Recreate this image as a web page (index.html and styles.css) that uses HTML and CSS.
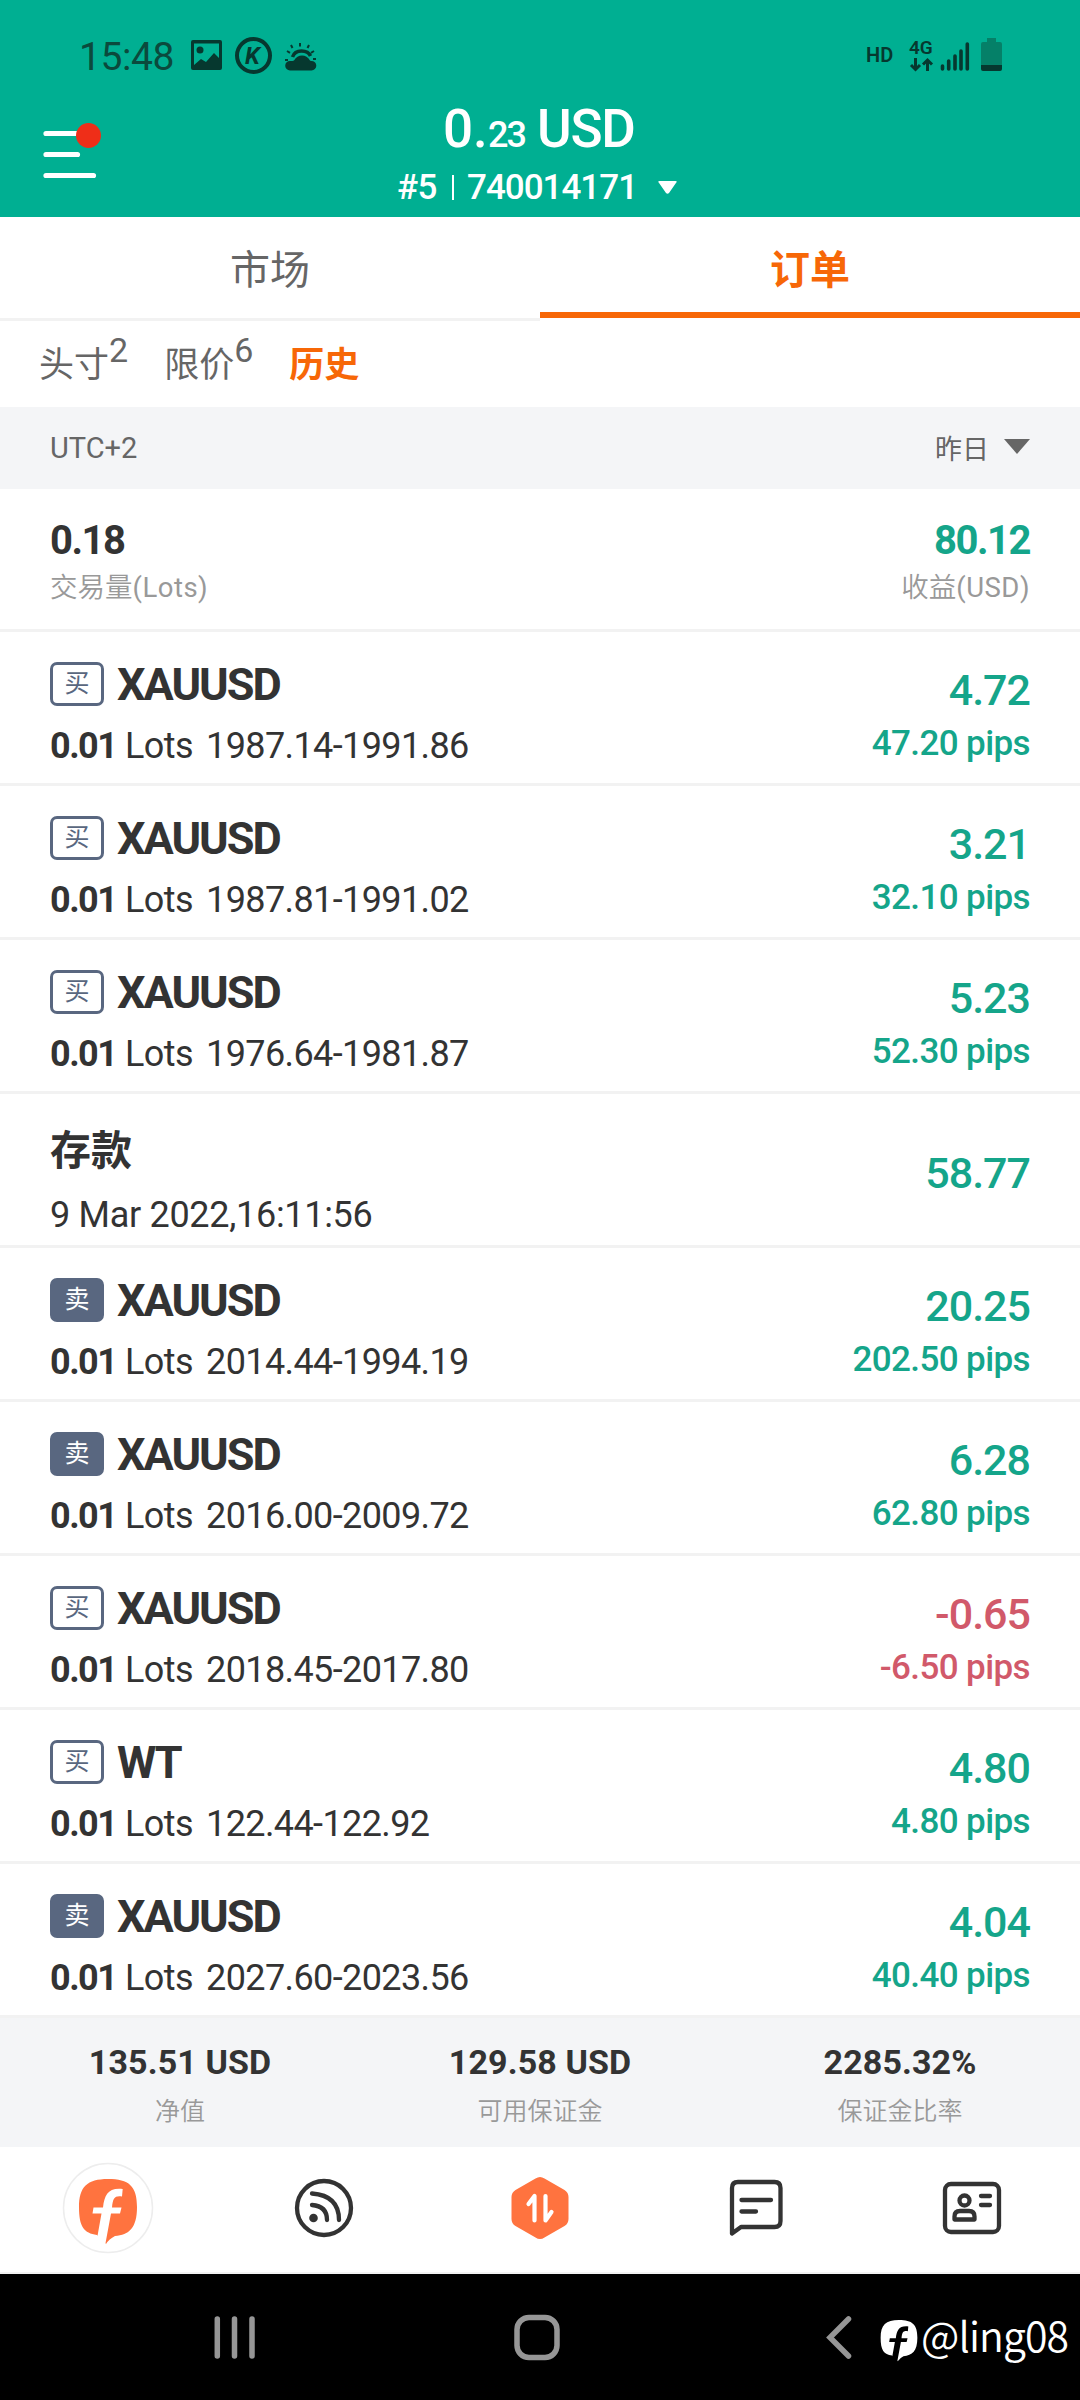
FILE: index.html
```html
<!DOCTYPE html>
<html lang="zh-CN">
<head>
<meta charset="utf-8">
<title>订单</title>
<link rel="stylesheet" href="styles.css">
</head>
<body>
<div class="screen">
  <header class="header">
    <div class="status">
      <span class="clock">15:48</span>
      <svg class="st-left" width="130" height="40" viewBox="188 36 130 40">
        <path fill="#06382f" fill-rule="evenodd" d="M193 40h27a2 2 0 0 1 2 2v26a2 2 0 0 1-2 2h-27a2 2 0 0 1-2-2V42a2 2 0 0 1 2-2zM194 43.500V65l7-6 5 3 8-9 5 5V43.500z"/>
        <circle cx="200" cy="50" r="3.500" fill="#06382f"/>
        <circle cx="253.500" cy="55.500" r="16.500" fill="none" stroke="#06382f" stroke-width="4"/>
        <text class="k-letter" x="245" y="64">K</text>
        <path fill="#06382f" d="M290 70.500a4.800 4.800 0 0 1 0-9.600q3 0 4-.5q3-5 8-5t8 5q1 .5 1.500.5a4.800 4.800 0 0 1 0 9.600z"/>
        <path fill="none" stroke="#06382f" stroke-width="3.500" d="M292.500 57q2-6 9-6t9 5"/>
        <path fill="none" stroke="#06382f" stroke-width="2" d="M300 43v3.500M309 45l-1.500 3M291 45l1.500 3M314 51l-3 1.800M287 51l3 1.800M316 59h-3M285 60h3"/>
      </svg>
      <svg class="st-right" width="140" height="40" viewBox="864 36 140 40">
        <text class="hd" x="866" y="62">HD</text>
        <text class="net" x="909" y="53.500">4G</text>
        <path fill="none" stroke="#06382f" stroke-width="3" d="M915.500 58v11M911 65l4.500 4.500 4.500-4.500M927.500 71V60.500M923 64.500l4.500-4.500 4.500 4.500"/>
        <path fill="none" stroke="#06382f" stroke-width="3.600" stroke-linecap="round" d="M942.500 66v3M948.700 61v8M955 56v13M961 51v18M967.300 44v25"/>
        <path fill="#058068" d="M987 38h9v4h4a2 2 0 0 1 2 2v21h-21V44a2 2 0 0 1 2-2h4z"/>
        <path fill="#06382f" d="M981 65h21v4a2 2 0 0 1-2 2h-17a2 2 0 0 1-2-2z"/>
      </svg>
    </div>
    <div class="account">
      <svg class="menu" width="60" height="58" viewBox="42 122 60 58">
        <path stroke="#fff" stroke-width="5.200" stroke-linecap="round" d="M46 133.500h40M46 154.500h31.500M46 175.500h47.500"/>
        <circle cx="88.500" cy="135.500" r="12.500" fill="#ef2e18"/>
      </svg>
      <div class="balance-box">
        <div class="balance"><span class="whole">0.</span><span class="cents">23</span><span class="cur">USD</span></div>
        <div class="acct"><span class="num-id">#5</span><i class="bar"></i><span class="num-acct">740014171</span><svg class="caret" width="19" height="13" viewBox="0 0 19 13"><path fill="#fff" d="M1.500 0h16q2 0 .8 1.600l-7.300 10.400q-1.500 1.600-3 0L.7 1.600Q-.5 0 1.500 0z"/></svg></div>
      </div>
    </div>
  </header>

  <nav class="tabs"><div class="tab">市场</div><div class="tab active">订单</div></nav>
  <nav class="subtabs"><span class="sub">头寸<b class="cnt">2</b></span><span class="sub">限价<b class="cnt">6</b></span><span class="sub on">历史</span></nav>
  <div class="filter"><span class="tz">UTC+2</span><span class="day">昨日<svg width="26" height="15" viewBox="0 0 26 15"><path fill="#666" d="M0 0h26L13 15z"/></svg></span></div>
  <section class="summary">
    <div><div class="total">0.18</div><div class="caption">交易量<span class="lat">(Lots)</span></div></div>
    <div class="right"><div class="total gain">80.12</div><div class="caption">收益<span class="lat">(USD)</span></div></div>
  </section>

  <main class="orders">
    <article class="row"><div><div class="sym"><span class="badge buy">买</span><span class="name">XAUUSD</span></div><div class="detail"><b>0.01</b><span class="unit">Lots</span><span class="px">1987.14-1991.86</span></div></div><div class="result gain"><div class="amt">4.72</div><div class="pips">47.20 pips</div></div></article>
    <article class="row"><div><div class="sym"><span class="badge buy">买</span><span class="name">XAUUSD</span></div><div class="detail"><b>0.01</b><span class="unit">Lots</span><span class="px">1987.81-1991.02</span></div></div><div class="result gain"><div class="amt">3.21</div><div class="pips">32.10 pips</div></div></article>
    <article class="row"><div><div class="sym"><span class="badge buy">买</span><span class="name">XAUUSD</span></div><div class="detail"><b>0.01</b><span class="unit">Lots</span><span class="px">1976.64-1981.87</span></div></div><div class="result gain"><div class="amt">5.23</div><div class="pips">52.30 pips</div></div></article>
    <article class="row deposit"><div><div class="dep-name">存款</div><div class="dep-time">9 Mar 2022,16:11:56</div></div><div class="result gain"><div class="amt">58.77</div></div></article>
    <article class="row"><div><div class="sym"><span class="badge sell">卖</span><span class="name">XAUUSD</span></div><div class="detail"><b>0.01</b><span class="unit">Lots</span><span class="px">2014.44-1994.19</span></div></div><div class="result gain"><div class="amt">20.25</div><div class="pips">202.50 pips</div></div></article>
    <article class="row"><div><div class="sym"><span class="badge sell">卖</span><span class="name">XAUUSD</span></div><div class="detail"><b>0.01</b><span class="unit">Lots</span><span class="px">2016.00-2009.72</span></div></div><div class="result gain"><div class="amt">6.28</div><div class="pips">62.80 pips</div></div></article>
    <article class="row"><div><div class="sym"><span class="badge buy">买</span><span class="name">XAUUSD</span></div><div class="detail"><b>0.01</b><span class="unit">Lots</span><span class="px">2018.45-2017.80</span></div></div><div class="result loss"><div class="amt">-0.65</div><div class="pips">-6.50 pips</div></div></article>
    <article class="row"><div><div class="sym"><span class="badge buy">买</span><span class="name">WT</span></div><div class="detail"><b>0.01</b><span class="unit">Lots</span><span class="px">122.44-122.92</span></div></div><div class="result gain"><div class="amt">4.80</div><div class="pips">4.80 pips</div></div></article>
    <article class="row"><div><div class="sym"><span class="badge sell">卖</span><span class="name">XAUUSD</span></div><div class="detail"><b>0.01</b><span class="unit">Lots</span><span class="px">2027.60-2023.56</span></div></div><div class="result gain"><div class="amt">4.04</div><div class="pips">40.40 pips</div></div></article>
  </main>

  <section class="margin">
    <div><div class="m-val">135.51 USD</div><div class="m-cap">净值</div></div>
    <div><div class="m-val">129.58 USD</div><div class="m-cap">可用保证金</div></div>
    <div><div class="m-val">2285.32%</div><div class="m-cap">保证金比率</div></div>
  </section>

  <nav class="appbar">
    <svg width="92" height="92" viewBox="62 2162 92 92">
      <circle cx="108" cy="2208" r="44.500" fill="#fff" stroke="#ededed" stroke-width="1.500"/>
      <path fill="#ff733f" d="M108 2179C129 2179 137 2186 137 2207S129 2235 115 2236Q109 2239 106 2244L97 2235C84 2233 79 2227 79 2207S87 2179 108 2179z"/>
      <path fill="#fff" d="M122.700 2189C108 2187.500 104.500 2195 103 2207.500H93.500L92.500 2213.500H101.500L95.500 2247H104.800L111 2213.500H120L121.500 2207.500H112C113 2198 114.500 2195.500 122 2196.500z"/>
    </svg>
    <svg width="60" height="60" viewBox="294 2178 60 60" fill="none" stroke="#333" stroke-width="4.300" stroke-linecap="round">
      <circle cx="324" cy="2208" r="27"/><path d="M312 2193.500q27 2 27 26.500M312 2205q15 1 15 15"/><circle cx="313.500" cy="2218" r="4.300" fill="#333" stroke="none"/>
    </svg>
    <svg width="60" height="64" viewBox="510 2176 60 64">
      <path fill="#ff733f" d="M535.500 2178.500q4.500-3 9 0l20 11.500q4 2.500 4 7v22q0 4.500-4 7l-20 11.500q-4.500 3-9 0l-20-11.500q-4-2.500-4-7v-22q0-4.500 4-7z"/>
      <path fill="none" stroke="#fff" stroke-width="4.200" stroke-linecap="round" stroke-linejoin="round" d="M528.500 2204l6-8v24.500M545.500 2196v24.500l6-8.500"/>
    </svg>
    <svg width="60" height="60" viewBox="726 2180 60 60" fill="none" stroke="#333" stroke-width="4.300" stroke-linecap="round" stroke-linejoin="round">
      <path d="M738 2184h36.500q6 0 6 6v33q0 6-6 6H741l-9 6.500V2190q0-6 6-6zM741.500 2202H771M741.500 2213.500H756"/>
    </svg>
    <svg width="60" height="60" viewBox="942 2178 60 60" fill="none" stroke="#333" stroke-width="4.300" stroke-linecap="round" stroke-linejoin="round">
      <rect x="945" y="2184" width="54" height="48" rx="6"/><circle cx="964.500" cy="2200.500" r="5"/><path d="M954.500 2219.500v-3q0-5.500 5.500-5.500h9q5.500 0 5.500 5.500v3zM981 2196h9M981 2205h9"/>
    </svg>
  </nav>

  <footer class="sysnav">
    <svg class="keys" width="640" height="60" viewBox="212 2308 640 60" fill="none" stroke="#969696" stroke-width="5.500" stroke-linecap="round">
      <path d="M217.300 2319v37M234.500 2319v37M252 2319v37"/><rect x="517" y="2317.500" width="40" height="40" rx="12"/><path stroke-linejoin="miter" d="M848.500 2319l-18.500 18.500 18.500 18.500"/>
    </svg>
    <div class="mark">
      <svg width="38" height="44" viewBox="78 2178 60 68">
        <path fill="#fff" d="M108 2179C129 2179 137 2186 137 2207S129 2235 115 2236Q109 2239 106 2244L97 2235C84 2233 79 2227 79 2207S87 2179 108 2179z"/>
        <path d="M122.700 2189C108 2187.500 104.500 2195 103 2207.500H93.500L92.500 2213.500H101.500L95.500 2247H104.800L111 2213.500H120L121.500 2207.500H112C113 2198 114.500 2195.500 122 2196.500z"/>
      </svg>
      <span>@ling08</span>
    </div>
  </footer>
</div>
</body>
</html>
```
FILE: styles.css
```css
* { box-sizing: border-box; }
body { margin: 0; background: #fff; font-family: Roboto, "Noto Sans CJK SC", sans-serif; color: #333; }
svg { display: block; }
.screen { width: 1080px; height: 2400px; display: flex; flex-direction: column; overflow: hidden; white-space: nowrap; }

.header { height: 217px; background: #00af92; color: #fff; }
.status { height: 76px; padding: 36px 76px 0 79px; display: flex; align-items: flex-start; }
.clock { width: 109px; font-size: 39px; line-height: 42px; color: #0b4a3d; letter-spacing: -.4px; font-weight: 400; }
.st-right { margin-left: auto; }
.k-letter { font: italic 700 24px Roboto, sans-serif; fill: #06382f; }
.hd { font: 600 20px Roboto, sans-serif; fill: #06382f; }
.net { font: 600 19px Roboto, sans-serif; fill: #06382f; }
.account { display: flex; padding-left: 42px; }
.menu { margin-top: 46px; }
.balance-box { margin-left: 295px; padding-top: 25px; }
.balance { display: flex; align-items: baseline; height: 64px; line-height: 56px; padding-left: 46px; }
.whole, .cur { font-size: 53px; font-weight: 500; }
.whole { width: 45px; letter-spacing: 0; }
.cents { font-size: 36px; letter-spacing: -2px; width: 49px; font-weight: 500; }
.cur { letter-spacing: -1.200px; }
.acct { display: flex; align-items: center; height: 44px; font-size: 35px; font-weight: 500; }
.num-id { width: 55px; letter-spacing: -.5px; }
.bar { width: 2px; height: 25px; background: #fff; margin-right: 13px; }
.num-acct { width: 191px; letter-spacing: -1px; }

.tabs { height: 104px; display: grid; grid-template-columns: 1fr 1fr; grid-template-rows: 104px; }
.tab { height: 104px; padding-top: 3px; text-align: center; font-size: 40px; line-height: 101px; color: #666; border-bottom: 3px solid #f2f2f2; }
.tab.active { color: #f76707; font-weight: 700; height: 101px; border-bottom: 6px solid #f76707; }
.subtabs { height: 86px; padding: 12px 39px; display: flex; font-size: 35px; line-height: 60px; color: #666; gap: 36px; }
.cnt { font-weight: 400; font-size: 34px; line-height: 1; vertical-align: 15px; margin-left: 0; }
.sub { height: 60px; margin-top: 0; }
.sub.on { color: #f76707; font-weight: 700; margin: 3px 0 0; }
.filter { height: 82px; background: #f4f5f7; padding: 0 50px; display: flex; align-items: center; justify-content: space-between; color: #666; font-size: 29px; }
.tz { letter-spacing: 0; }
.day { display: flex; align-items: center; gap: 15px; font-size: 27px; margin-top: -2px; }
.day svg { margin-top: -2px; }
.summary { height: 143px; border-bottom: 3px solid #f2f2f2; padding: 27px 50px 0; display: flex; justify-content: space-between; }
.total { font-size: 40px; font-weight: 700; line-height: 50px; letter-spacing: -1.500px; }
.caption { margin-top: 3px; font-size: 27.500px; line-height: 38px; color: #999; font-weight: 350; }
.lat { font-weight: 400; letter-spacing: .5px; }
.right { text-align: right; }
.gain { color: #15a58a; }
.loss { color: #d1596a; }

.orders { height: 1386px; overflow: hidden; }
.row { height: 154px; border-bottom: 3px solid #f2f2f2; padding: 0 50px; display: flex; justify-content: space-between; }
.sym { display: flex; height: 44px; margin-top: 30px; align-items: center; gap: 13px; }
.badge { width: 54px; height: 44px; border-radius: 7px; border: 3px solid #596780; font-size: 25px; line-height: 38px; text-align: center; color: #596780; }
.sell { background: #596780; color: #fff; }
.name { font-size: 45px; font-weight: 700; letter-spacing: -2px; line-height: 44px; padding-top: 2px; }
.detail { display: flex; font-size: 36px; line-height: 44px; margin-top: 18px; }
.detail b { width: 75px; letter-spacing: -1.500px; }
.unit { width: 81px; letter-spacing: -.6px; }
.px { letter-spacing: -.6px; }
.result { text-align: right; font-weight: 500; }
.amt { margin-top: 33px; font-size: 43px; line-height: 50px; letter-spacing: -1px; }
.pips { font-size: 35px; line-height: 44px; margin-top: 7px; letter-spacing: -.6px; }
.dep-name { margin-top: 32px; font-size: 41px; line-height: 50px; font-weight: 700; }
.dep-time { margin-top: 17px; font-size: 36px; line-height: 44px; letter-spacing: -.3px; }
.deposit .amt { margin-top: 54px; }

.margin { height: 129px; background: #f4f5f7; display: grid; grid-template-columns: repeat(3, 1fr); text-align: center; padding-top: 24px; }
.m-val { font-size: 34px; font-weight: 700; line-height: 40px; letter-spacing: .1px; }
.m-cap { font-size: 25px; line-height: 36px; margin-top: 12px; color: #999; font-weight: 350; }
.appbar { height: 127px; border-bottom: 2px solid #f2f2f2; padding-bottom: 3px; display: grid; grid-template-columns: repeat(5, 1fr); align-items: center; justify-items: center; }
.sysnav { height: 126px; background: #000; display: flex; padding-left: 212px; padding-top: 34px; }
.mark { display: flex; color: #fff; margin-left: 28px; font: 350 41px/52px "Noto Sans CJK SC", sans-serif; letter-spacing: -.9px; gap: 3px; }
.mark svg { margin-top: 11px; flex: none; }
```
